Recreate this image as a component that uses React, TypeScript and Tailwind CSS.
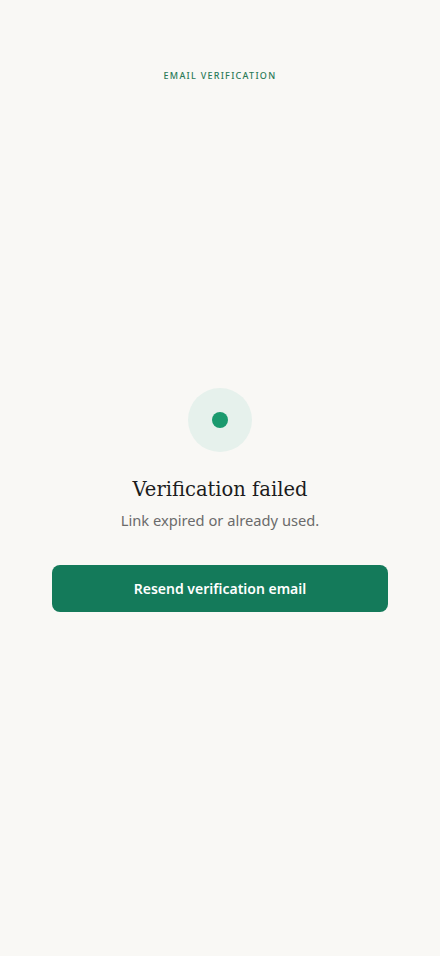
export default function App() {
  return (
    <div className="min-h-[956px] w-full bg-[#f9f8f5] flex flex-col items-center" style={{ fontFamily: '"Noto Sans", "Open Sans", sans-serif' }}>
      <div className="pt-[69px] h-[82px] text-[9px] leading-[14px] tracking-[0.14em] text-[#2a7a58] font-medium">
        EMAIL VERIFICATION
      </div>
      <div className="mt-[306px] flex flex-col items-center w-full px-[52px]">
        <div className="w-16 h-16 rounded-full bg-[#e6f1ec] flex items-center justify-center">
          <div className="w-4 h-4 rounded-full bg-[#1b9a6e]" />
        </div>
        <h1 className="mt-[24px] text-[19.5px] leading-[28px] text-[#1c1c1c]" style={{ fontFamily: '"DejaVu Serif", "Liberation Serif", serif' }}>
          Verification failed
        </h1>
        <p className="mt-[5px] text-[14.7px] leading-[22px] text-[#6b6b6b]">Link expired or already used.</p>
        <button className="mt-[34px] w-full h-[47px] rounded-lg bg-[#147a5a] text-white text-[14px] font-semibold">
          Resend verification email
        </button>
      </div>
    </div>
  );
}
